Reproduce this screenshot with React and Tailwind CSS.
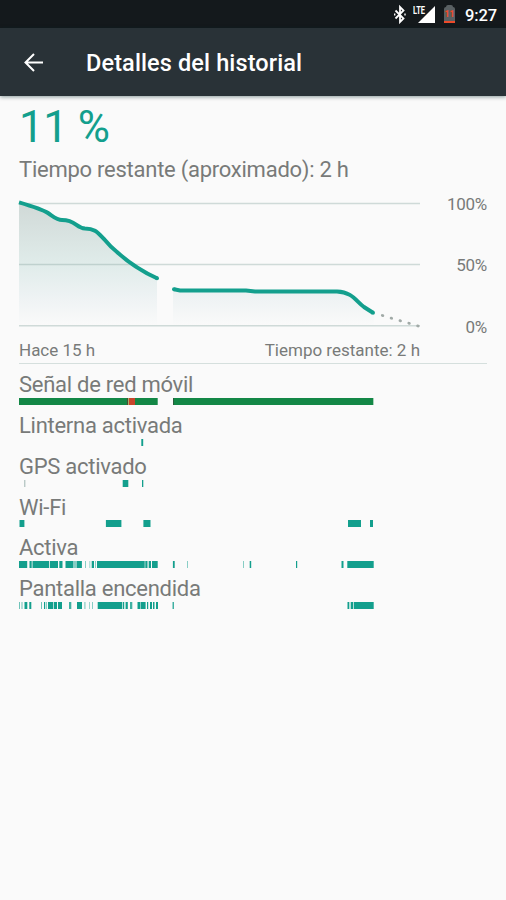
import React from "react";

const TEAL = "#139f8d";
const GREEN = "#138746";

// Every segment is [start, end, colour, opacity], in timeline units.
const rows = [
  {
    label: "Señal de red móvil",
    segments: [
      [0, 138.7, GREEN],
      [108, 109, "#4a4a34"],
      [109, 110, "#a7b06c"],
      [110, 116, "#c8452b"],
      [154, 354, GREEN],
      [154, 155, "#2c5c3b"],
      [354, 354.7, GREEN, 0.5],
    ],
  },
  { label: "Linterna activada", segments: [[122.3, 124.2]] },
  {
    label: "GPS activado",
    segments: [[5.3, 6.3, "#6f8f8b", 0.65], [103.7, 109.3], [123, 124.3]],
  },
  {
    label: "Wi-Fi",
    segments: [[0.5, 5.4], [86.9, 102.4], [124.4, 131.5], [329, 342], [351, 354]],
  },
  {
    label: "Activa",
    segments: [
      [0, 8.2], [10.5, 12.7], [13.5, 30.2], [31, 39], [40.3, 43.5], [46.5, 54.5],
      [55.5, 56.5], [57.5, 62.9], [66, 67, TEAL, 0.5], [70.3, 71.3, TEAL, 0.4],
      [72.7, 75], [76, 77, TEAL, 0.5], [78, 125.5], [125.5, 126.5, TEAL, 0.8], [126.5, 128.5],
      [129.7, 132], [133, 138.7], [153.9, 155.7], [168.2, 169, TEAL, 0.6], [224, 225, TEAL, 0.5],
      [230.7, 232.2], [277, 278.2], [322.5, 324.5], [328.3, 354.7],
    ],
  },
  {
    label: "Pantalla encendida",
    segments: [
      [0, 1, TEAL, 0.6], [2.5, 3.5, TEAL, 0.6], [5.5, 8.3], [10.3, 12.3],
      [22, 23, TEAL, 0.6], [25, 26.2], [27, 28, TEAL, 0.5], [29, 34.3], [35, 38],
      [39, 43], [50, 52.3, TEAL, 0.8], [58, 63], [65.3, 66.5, TEAL, 0.5],
      [70, 71, TEAL, 0.4], [73, 74, TEAL, 0.5], [78.7, 103], [103.7, 105.2],
      [106.6, 108.8], [111, 113.3, TEAL, 0.8], [118.5, 121.5], [122, 126.6],
      [128, 129.2], [131, 133], [134, 135.5], [137, 139], [153.6, 154.8],
      [328.5, 330.3], [331.7, 334], [334.7, 354.7],
    ],
  },
];

function StatusBar() {
  return (
    <div className="flex h-7 shrink-0 items-center justify-end bg-[#14191c] pr-[9px] text-white">
      <svg className="mr-[7px] h-5 w-3" viewBox="0 0 12 20" fill="none" stroke="white" strokeWidth="1.8">
        <path d="M1.500 6.500 9.500 14.500 6 18V3L9.500 6.500 1.500 14.500" />
        <path d="M0.700 9.500v2M11 9.500v2" strokeWidth="1.400" />
      </svg>
      <div className="relative mr-[9px] h-5 w-[22px]">
        <svg className="h-5 w-[22px]" viewBox="0 0 22 20">
          <path d="M22 2v17H5z" fill="white" />
          <path d="M0 0h12.500v11H0z" fill="#14191c" />
        </svg>
        <span className="absolute top-[1px] left-0 origin-left scale-x-[0.68] text-[11px] leading-[11px] font-bold">LTE</span>
      </div>
      <div className="relative mr-[10px] h-[18px] w-[11px]">
        <svg className="block h-[18px] w-[11px]" viewBox="0 0 11 18">
          <path d="M0 18V4Q0 2 2 2Q2 0 4 0h3Q9 0 9 2Q11 2 11 4v14z" fill="#596063" />
          <path d="M0 16h11v2H0z" fill="#ed4a2a" />
        </svg>
        <span className="absolute inset-x-0 top-[5px] text-center text-[8.500px] leading-[8px] font-black text-[#ed4a2a]">11</span>
      </div>
      <span className="pt-[3px] text-[16.500px] leading-5 font-medium tracking-[-0.100px]">9:27</span>
    </div>
  );
}

function Chart() {
  return (
    <div className="flex h-[138px]">
      <svg className="h-[138px] w-[401px] shrink-0 overflow-visible" viewBox="19 194 401 138" fill="none">
        <defs>
          <linearGradient id="fill" x1="0" y1="203" x2="0" y2="326" gradientUnits="userSpaceOnUse">
            <stop offset="0" stopColor="#d0d9d7" />
            <stop offset="0.5" stopColor="#e0ecea" />
            <stop offset="0.75" stopColor="#edf2f3" />
            <stop offset="1" stopColor="#fafafa" />
          </linearGradient>
        </defs>
        <path d="M19 203 C30 206 42 210 48 213 C54 217 57 220 62 220 C76 220 76 228 85 228.500 C95 229 96 231 104 238 C114 250 132 267 157 278V326H19z" fill="url(#fill)" />
        <path d="M173 289 180 290.500H246L255 291.500H337C352 292 356 301 364 307L374 313V326H173z" fill="url(#fill)" />
        <path d="M19 203.500H420M19 264.500H420M19 325.800H420" stroke="#8faaa4" strokeOpacity="0.4" strokeWidth="1.4" />
        <g stroke={TEAL} strokeWidth="4">
          <path d="M19 202.300 C30 205.500 42 209 48 213 C54 217 57 220 62 220 C76 220 76 228 85 228.400 C95 228.500 98 233 104 239 C109 245 112 248 117 252 C129 263 141 271 157 278.300" />
          <path d="M174 289.300 180 290.400H246L255 291.400H337C352 292 356 301 364 307L373 312.800" />
          <g fill={TEAL} stroke="none">
            <circle cx="157" cy="278.200" r="2" />
            <circle cx="174" cy="289.300" r="2" />
            <circle cx="373" cy="312.800" r="2" />
          </g>
        </g>
        <path d="M382.300 315.500 420 326.500" stroke="#a1aaa7" strokeWidth="2.800" strokeLinecap="round" strokeDasharray="0.6 8.600" />
      </svg>
      <div className="flex flex-1 flex-col items-end text-[17px] leading-5 tracking-[-0.250px]">
        <span>100%</span>
        <span className="mt-[41px]">50%</span>
        <span className="mt-[42px]">0%</span>
      </div>
    </div>
  );
}

function HistoryRow({ label, segments }) {
  return (
    <div className="flex h-[40.750px] flex-col">
      <div className="h-[27px] pt-[2.300px] text-[22px] leading-[26px] tracking-[-0.270px] whitespace-nowrap">{label}</div>
      <svg className="mt-[1px] h-[7px] w-[401px] shrink-0" viewBox="0 0 401 7" preserveAspectRatio="none">
        {segments.map(([start, end, color = TEAL, opacity = 1], i) => (
          <rect key={i} x={start} y="0" width={end - start} height="7" fill={color} fillOpacity={opacity} />
        ))}
      </svg>
    </div>
  );
}

export default function App() {
  return (
    <div className="flex h-[900px] w-[506px] flex-col overflow-hidden bg-[#fafafa] font-[Roboto,sans-serif] text-[#787a79]">
      <StatusBar />
      <header className="relative flex h-[68px] shrink-0 items-center bg-[#293237] text-white shadow-[0_1px_4px_rgba(0,40,40,0.45)]">
        <svg className="ml-[24px] h-[19px] w-[19px]" viewBox="0 0 19 19" fill="none" stroke="white" strokeWidth="2">
          <path d="M19 9.500H2M10 1 1.500 9.500 10 18" />
        </svg>
        <h1 className="ml-[43px] pt-[1px] text-[23.500px] leading-8 font-medium tracking-[0.120px] whitespace-nowrap">Detalles del historial</h1>
      </header>
      <main className="flex flex-col px-[19px] pt-[4px]">
        <div className="h-[54px] text-[44px] leading-[54px] tracking-[-0.500px] text-[#139f8d]">11 %</div>
        <div className="h-[40px] pt-[3px] text-[22px] leading-[26px] tracking-[-0.250px] whitespace-nowrap">Tiempo restante (aproximado): 2 h</div>
        <Chart />
        <div className="flex h-[31px] w-[401px] justify-between pt-[8px] text-[17px] leading-5">
          <span>Hace 15 h</span>
          <span>Tiempo restante: 2 h</span>
        </div>
        <div className="h-px bg-[#d5dfdd]" />
        <div className="flex flex-col pt-[6px]">
          {rows.map((row) => (
            <HistoryRow key={row.label} label={row.label} segments={row.segments} />
          ))}
        </div>
      </main>
    </div>
  );
}
